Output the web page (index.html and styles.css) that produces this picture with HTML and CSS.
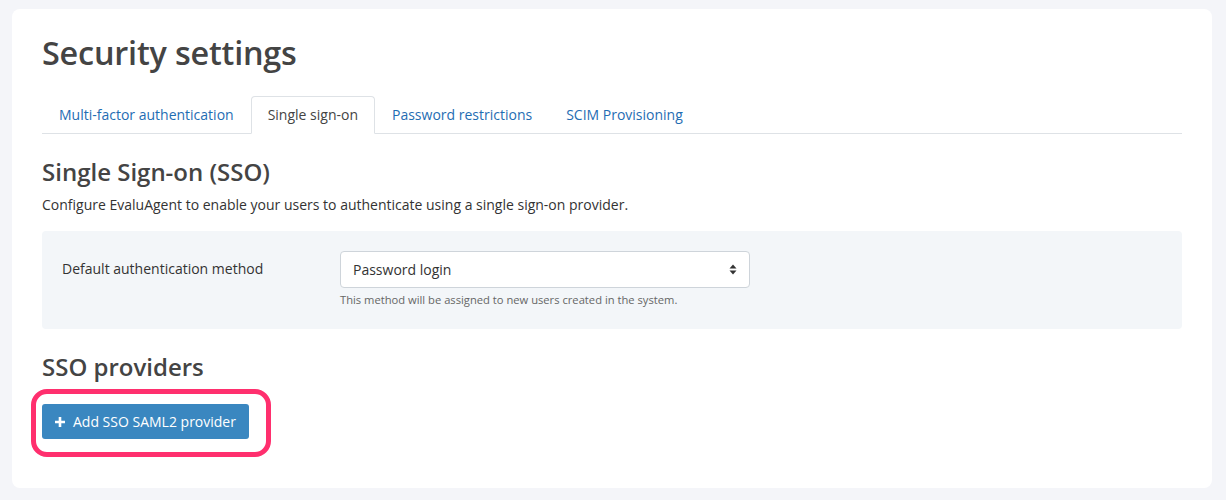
FILE: index.html
```html
<!DOCTYPE html>
<html lang="en">
<head>
<meta charset="utf-8">
<title>Security settings</title>
<link rel="stylesheet" href="styles.css">
</head>
<body>
<main class="card">
  <h1 class="page-title">Security settings</h1>
  <nav class="tabs">
    <a class="tab" href="#">Multi-factor authentication</a>
    <a class="tab active" href="#">Single sign-on</a>
    <a class="tab" href="#">Password restrictions</a>
    <a class="tab" href="#">SCIM Provisioning</a>
  </nav>
  <section class="section">
    <h2 class="section-title">Single Sign-on (SSO)</h2>
    <p class="lead">Configure EvaluAgent to enable your users to authenticate using a single sign-on provider.</p>
    <div class="panel">
      <label class="panel-label" for="method">Default authentication method</label>
      <div class="field">
        <div class="select">
          <span class="select-value">Password login</span>
          <svg class="select-caret" width="8" height="11" viewBox="0 0 8 11"><path d="M4 0.5 L7.5 4.5 H0.5 Z M4 10.5 L7.5 6.5 H0.5 Z" fill="#333"/></svg>
        </div>
        <div class="help">This method will be assigned to new users created in the system.</div>
      </div>
    </div>
    <h2 class="section-title providers">SSO providers</h2>
    <div class="btn-wrap">
      <button class="btn-primary" type="button"><svg class="plus" width="10" height="10" viewBox="0 0 10 10"><path d="M5 0 V10 M0 5 H10" stroke="#fff" stroke-width="2.6"/></svg>Add SSO SAML2 provider</button>
    </div>
  </section>
</main>
</body>
</html>
```

FILE: styles.css
```css
* { box-sizing: border-box; }
html, body { margin: 0; padding: 0; }
body {
  background: #f4f5f9;
  font-family: "Open Sans", "Liberation Sans", sans-serif;
  color: #333;
  padding: 9px 14px 12px 12px;
}
.card {
  background: #fff;
  border-radius: 8px;
  width: 1200px;
  height: 479px;
  padding: 20px 30px 30px 30px;
}
.page-title {
  margin: 0;
  font-size: 32.4px;
  font-weight: 600;
  color: #444;
  line-height: 46px;
  letter-spacing: -0.2px;
}
.tabs {
  display: flex;
  margin-top: 21px;
  border-bottom: 1px solid #dee2e6;
}
.tab {
  display: block;
  padding: 8px 16px;
  border: 1px solid transparent;
  border-radius: 4px 4px 0 0;
  margin-bottom: -1px;
  font-size: 14px;
  line-height: 20px;
  color: #1f6db3;
  text-decoration: none;
}
.tab.active {
  color: #444;
  background: #fff;
  border-color: #dee2e6 #dee2e6 #fff;
}
.section-title {
  margin: 0;
  font-size: 24px;
  font-weight: 600;
  color: #444;
  line-height: 32px;
}
.section > .section-title:first-child { margin-top: 22px; }
.lead {
  margin: 7px 0 0;
  font-size: 14px;
  line-height: 20px;
  color: #333;
}
.panel {
  margin-top: 16px;
  background: #f3f6f9;
  border-radius: 4px;
  padding: 20px 20px 20px 20px;
  display: flex;
  height: 98px;
}
.panel-label {
  width: 278px;
  flex: none;
  font-size: 14px;
  line-height: 35px;
  color: #333;
}
.field { width: 410px; }
.select {
  height: 37px;
  background: #fff;
  border: 1px solid #ced4da;
  border-radius: 4px;
  display: flex;
  align-items: center;
  justify-content: space-between;
  padding: 0 12px;
}
.select-value { font-size: 14px; color: #333; }
.select-caret { display: block; }
.help {
  margin-top: 5px;
  font-size: 11.2px;
  line-height: 14px;
  color: #666;
}
.section-title.providers { margin-top: 22px; }
.btn-wrap {
  position: relative;
  display: inline-block;
  margin-top: 21px;
}
.btn-wrap::after {
  content: "";
  position: absolute;
  left: -11px;
  top: -15px;
  right: -22px;
  bottom: -18px;
  border: 5px solid #ff2f6e;
  border-radius: 16px;
  pointer-events: none;
}
.btn-primary {
  display: flex;
  align-items: center;
  height: 35px;
  width: 207px;
  padding: 0 12px 0 13px;
  background: #3a87c0;
  border: none;
  border-radius: 3px;
  color: #fff;
  font-family: "Open Sans", "Liberation Sans", sans-serif;
  font-size: 14px;
  font-weight: 500;
}
.plus {
  display: block;
  flex: none;
  margin-right: 8px;
}
```
